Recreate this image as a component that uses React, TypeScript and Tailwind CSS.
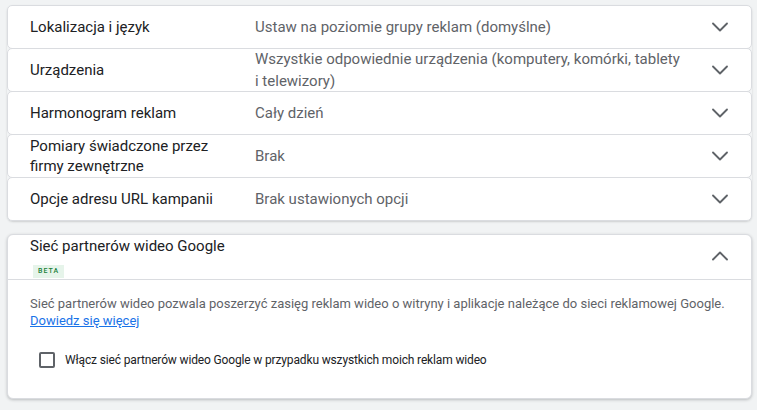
import { ChevronDown, ChevronUp } from 'lucide-react';

const rows = [
  { label: 'Lokalizacja i język', value: 'Ustaw na poziomie grupy reklam (domyślne)' },
  { label: 'Urządzenia', value: 'Wszystkie odpowiednie urządzenia (komputery, komórki, tablety i telewizory)' },
  { label: 'Harmonogram reklam', value: 'Cały dzień' },
  { label: 'Pomiary świadczone przez firmy zewnętrzne', value: 'Brak' },
  { label: 'Opcje adresu URL kampanii', value: 'Brak ustawionych opcji' },
];

const font = { fontFamily: 'Roboto, "Noto Sans", sans-serif' };

export default function App() {
  return (
    <div className="w-[757px] h-[410px] bg-[#f1f3f4] pt-[5px] pl-[7px] pr-[5px] overflow-hidden" style={font}>
      {/* Collapsed settings */}
      <div className="flex flex-col rounded-[6px] shadow-[0_1px_2px_rgba(60,64,67,0.2)]">
        {rows.map((r, i) => (
          <div key={r.label}
            className={`flex items-center h-[44px] bg-white border border-[#dadce0] rounded-[5px] pl-[22px] pr-[17px] ${i > 0 ? '-mt-px' : ''}`}>
            <div className="w-[225px] pr-[20px] text-[15px] leading-[20px] text-[#202124] shrink-0">{r.label}</div>
            <div className="w-[432px] text-[15px] leading-[22px] text-[#5f6368]">{r.value}</div>
            <div className="ml-auto flex items-center justify-center w-[28px]">
              <ChevronDown size={28} strokeWidth={1.6} className="text-[#5f6368]" />
            </div>
          </div>
        ))}
      </div>

      {/* Expanded video partners */}
      <div className="mt-[13px] bg-white rounded-[6px] border border-[#dadce0] shadow-[0_1px_3px_rgba(60,64,67,0.3)] h-[165px]">
        <div className="flex items-start h-[45px] pl-[22px] pr-[17px] border-b border-[#dadce0]">
          <div className="flex-1">
            <div className="text-[15px] leading-[20px] text-[#202124] pt-[1px]">Sieć partnerów wideo Google</div>
            <span className="inline-block mt-[8px] ml-[3px] px-[5px] h-[13px] leading-[13px] text-[7px] tracking-[1px] font-medium text-[#188038] bg-[#e6f4ea]">BETA</span>
          </div>
          <div className="mt-[7px] flex items-center justify-center w-[28px]">
            <ChevronUp size={28} strokeWidth={1.6} className="text-[#5f6368]" />
          </div>
        </div>
        <div className="pl-[22px] pr-[24px] pt-[15px]">
          <p className="text-[13px] leading-[17px] text-[#5f6368]">
            Sieć partnerów wideo pozwala poszerzyć zasięg reklam wideo o witryny i aplikacje należące do sieci reklamowej Google.
          </p>
          <a href="#" className="block w-fit text-[13px] leading-[17px] text-[#1a73e8] underline">Dowiedz się więcej</a>
          <label className="flex items-center gap-[10px] mt-[22px] ml-[9px]">
            <span className="w-[16px] h-[16px] border-2 border-[#5f6368] rounded-[2px]" />
            <span className="text-[12px] leading-[18px] tracking-[-0.15px] text-[#202124]">Włącz sieć partnerów wideo Google w przypadku wszystkich moich reklam wideo</span>
          </label>
        </div>
      </div>
    </div>
  );
}
